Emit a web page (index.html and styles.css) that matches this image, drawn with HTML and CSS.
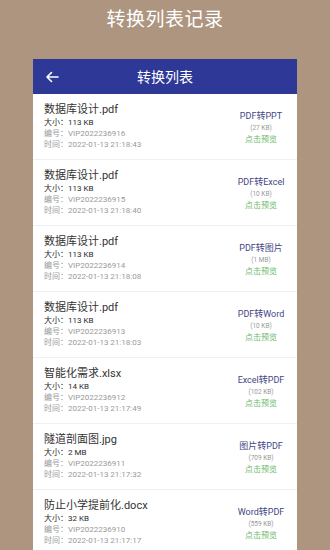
FILE: index.html
```html
<!DOCTYPE html>
<html lang="zh">
<head>
<meta charset="utf-8">
<link rel="stylesheet" href="styles.css">
</head>
<body>
<div class="page">
  <h1 class="page-title">转换列表记录</h1>
  <div class="card">
    <div class="bar">
      <svg class="back" width="14" height="12" viewBox="0 0 14 12"><path d="M13 6H2M6.5 1.5L2 6l4.5 4.5" fill="none" stroke="#fff" stroke-width="1.6" stroke-linecap="round" stroke-linejoin="round"/></svg>
      <div class="bar-title">转换列表</div>
    </div>
    <div class="list">
      <div class="row">
        <div class="info"><div class="name">数据库设计.pdf</div><div class="size">大小：113 KB</div><div class="meta">编号：VIP2022236916</div><div class="meta">时间：2022-01-13 21:18:43</div></div>
        <div class="conv"><div class="type">PDF转PPT</div><div class="out">(27 KB)</div><div class="view">点击预览</div></div>
      </div>
      <div class="row">
        <div class="info"><div class="name">数据库设计.pdf</div><div class="size">大小：113 KB</div><div class="meta">编号：VIP2022236915</div><div class="meta">时间：2022-01-13 21:18:40</div></div>
        <div class="conv"><div class="type">PDF转Excel</div><div class="out">(10 KB)</div><div class="view">点击预览</div></div>
      </div>
      <div class="row">
        <div class="info"><div class="name">数据库设计.pdf</div><div class="size">大小：113 KB</div><div class="meta">编号：VIP2022236914</div><div class="meta">时间：2022-01-13 21:18:08</div></div>
        <div class="conv"><div class="type">PDF转图片</div><div class="out">(1 MB)</div><div class="view">点击预览</div></div>
      </div>
      <div class="row">
        <div class="info"><div class="name">数据库设计.pdf</div><div class="size">大小：113 KB</div><div class="meta">编号：VIP2022236913</div><div class="meta">时间：2022-01-13 21:18:03</div></div>
        <div class="conv"><div class="type">PDF转Word</div><div class="out">(10 KB)</div><div class="view">点击预览</div></div>
      </div>
      <div class="row">
        <div class="info"><div class="name">智能化需求.xlsx</div><div class="size">大小：14 KB</div><div class="meta">编号：VIP2022236912</div><div class="meta">时间：2022-01-13 21:17:49</div></div>
        <div class="conv"><div class="type">Excel转PDF</div><div class="out">(102 KB)</div><div class="view">点击预览</div></div>
      </div>
      <div class="row">
        <div class="info"><div class="name">隧道剖面图.jpg</div><div class="size">大小：2 MB</div><div class="meta">编号：VIP2022236911</div><div class="meta">时间：2022-01-13 21:17:32</div></div>
        <div class="conv"><div class="type">图片转PDF</div><div class="out">(709 KB)</div><div class="view">点击预览</div></div>
      </div>
      <div class="row">
        <div class="info"><div class="name">防止小学提前化.docx</div><div class="size">大小：32 KB</div><div class="meta">编号：VIP2022236910</div><div class="meta">时间：2022-01-13 21:17:17</div></div>
        <div class="conv"><div class="type">Word转PDF</div><div class="out">(559 KB)</div><div class="view">点击预览</div></div>
      </div>
    </div>
  </div>
</div>
</body>
</html>
```

FILE: styles.css
```css
* { box-sizing: border-box; margin: 0; padding: 0; }
html, body { width: 330px; height: 550px; overflow: hidden; }
body {
  background: #ad957f;
  font-family: Roboto, "Noto Sans CJK SC", sans-serif;
}
.page { display: flex; flex-direction: column; align-items: center; }
.page-title {
  color: #fff;
  font-size: 19px;
  font-weight: 400;
  line-height: 24px;
  margin-top: 8px;
  letter-spacing: 0.5px;
}
.card {
  margin-top: 27px;
  width: 264px;
  background: #fff;
}
.bar {
  height: 35px;
  background: #2e3897;
  display: flex;
  align-items: center;
  padding-left: 12px;
}
.back { flex: none; }
.bar-title {
  flex: 1;
  text-align: center;
  color: #fff;
  font-size: 14px;
  margin-right: 26px;
  line-height: 35px;
  padding-top: 2px;
}
.row {
  height: 66px;
  display: flex;
  align-items: flex-start;
  padding: 9px 4px 0 11px;
  border-bottom: 1px solid #f0f0f0;
}
.info { flex: 1; }
.name { font-size: 11px; color: #333; line-height: 14px; }
.size { font-size: 8px; color: #2a2a2a; line-height: 11px; }
.meta { font-size: 8px; color: #9a9a9a; line-height: 11px; }
.conv {
  width: 64px;
  display: flex;
  flex-direction: column;
  align-items: center;
  padding-top: 7px;
}
.type { font-size: 9px; color: #3f4684; line-height: 12px; }
.out { font-size: 6.5px; color: #999; line-height: 12px; }
.view { font-size: 8px; color: #6cb96c; line-height: 12px; }
```
